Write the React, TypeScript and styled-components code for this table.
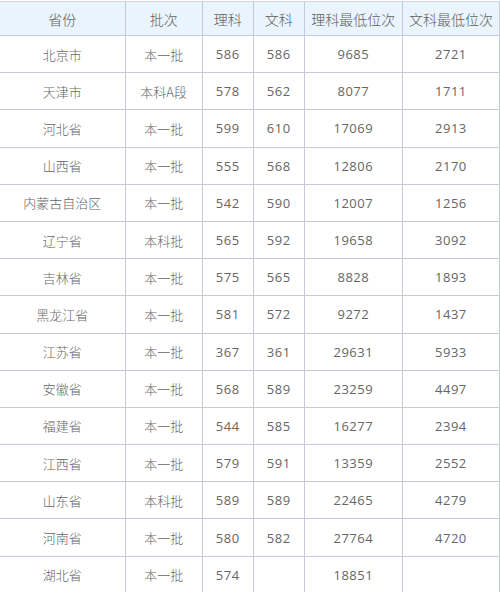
import React from "react";
import styled, { createGlobalStyle } from "styled-components";

const GlobalStyle = createGlobalStyle`
  html, body {
    margin: 0;
    padding: 0;
    background: #ffffff;
  }
  body {
    font-family: "Noto Sans CJK SC", "Open Sans", "DejaVu Sans", sans-serif;
  }
`;

type Row = [string, string, string, string, string, string];

const rows: Row[] = [
  ["北京市", "本一批", "586", "586", "9685", "2721"],
  ["天津市", "本科A段", "578", "562", "8077", "1711"],
  ["河北省", "本一批", "599", "610", "17069", "2913"],
  ["山西省", "本一批", "555", "568", "12806", "2170"],
  ["内蒙古自治区", "本一批", "542", "590", "12007", "1256"],
  ["辽宁省", "本科批", "565", "592", "19658", "3092"],
  ["吉林省", "本一批", "575", "565", "8828", "1893"],
  ["黑龙江省", "本一批", "581", "572", "9272", "1437"],
  ["江苏省", "本一批", "367", "361", "29631", "5933"],
  ["安徽省", "本一批", "568", "589", "23259", "4497"],
  ["福建省", "本一批", "544", "585", "16277", "2394"],
  ["江西省", "本一批", "579", "591", "13359", "2552"],
  ["山东省", "本科批", "589", "589", "22465", "4279"],
  ["河南省", "本一批", "580", "582", "27764", "4720"],
  ["湖北省", "本一批", "574", "", "18851", ""],
];

const headers = ["省份", "批次", "理科", "文科", "理科最低位次", "文科最低位次"];
const widths = [125, 77, 51, 51, 98, 97];

const Table = styled.table`
  width: 500px;
  border-collapse: collapse;
  table-layout: fixed;
  margin-top: 1px;
`;

const HeadCell = styled.th`
  height: 33px;
  padding: 0;
  background: #e9f4fc;
  border: 1px solid #c9c9dc;
  border-top-color: #d4d4e2;
  color: #606060;
  font-size: 14px;
  font-weight: 300;
  text-align: center;
`;

const Cell = styled.td<{ $num?: boolean }>`
  height: 36.2px;
  padding: 0;
  border: 1px solid #c9c9dc;
  color: #666666;
  font-size: 13px;
  font-weight: ${({ $num }) => ($num ? "400" : "300")};
  font-family: ${({ $num }) =>
    $num
      ? '"Open Sans", "Noto Sans CJK SC", sans-serif'
      : '"Noto Sans CJK SC", sans-serif'};
  text-align: center;
  letter-spacing: ${({ $num }) => ($num ? "0.5px" : "0")};
`;

const Edge = styled.tr`
  & > *:first-child {
    border-left: none;
  }
`;

export default function App() {
  return (
    <>
      <GlobalStyle />
      <Table>
        <colgroup>
          {widths.map((w, i) => (
            <col key={i} style={{ width: w }} />
          ))}
        </colgroup>
        <thead>
          <Edge>
            {headers.map((h) => (
              <HeadCell key={h}>{h}</HeadCell>
            ))}
          </Edge>
        </thead>
        <tbody>
          {rows.map((r) => (
            <Edge key={r[0]}>
              {r.map((v, i) => (
                <Cell key={i} $num={i >= 2}>
                  {v}
                </Cell>
              ))}
            </Edge>
          ))}
        </tbody>
      </Table>
    </>
  );
}
